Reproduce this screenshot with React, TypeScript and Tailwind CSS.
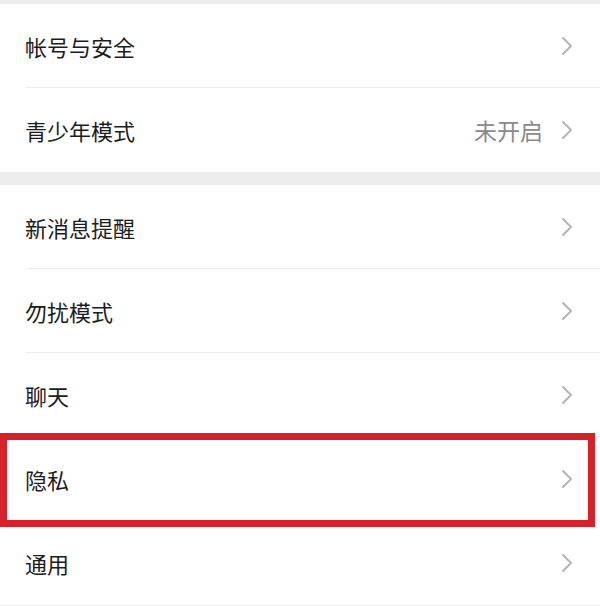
const font = { fontFamily: '"Noto Sans CJK SC", "Noto Sans", sans-serif' };

function Chevron() {
  return (
    <svg width="12" height="20" viewBox="0 0 12 20" fill="none" className="shrink-0">
      <path d="M2 2 L10 10 L2 18" stroke="#b4b4b4" strokeWidth="2" strokeLinecap="round" strokeLinejoin="round" />
    </svg>
  );
}

function Row({ label, value, divider = true, highlight = false }: { label: string; value?: string; divider?: boolean; highlight?: boolean }) {
  return (
    <div className="relative h-[84px] bg-white">
      <div className="flex h-full items-center pl-[25px] pr-[27px]">
        <span className="text-[22px] leading-none text-[#1c1c1c]">{label}</span>
        <div className="ml-auto flex items-center gap-[18px]">
          {value && <span className="text-[23px] leading-none text-[#8a8a8a]">{value}</span>}
          <Chevron />
        </div>
      </div>
      {divider && <div className="absolute bottom-0 left-[26px] right-0 h-px bg-[#ececec]" />}
      {highlight && (
        <div className="pointer-events-none absolute -top-[4px] left-0 z-10 h-[94px] w-[595px] border-[7px] border-[#d7222c]" />
      )}
    </div>
  );
}

export default function App() {
  return (
    <div className="h-[606px] w-[600px] overflow-hidden bg-[#ededed]" style={font}>
      <div className="h-[4px]" />
      <Row label="帐号与安全" />
      <Row label="青少年模式" value="未开启" divider={false} />
      <div className="h-[13px]" />
      <Row label="新消息提醒" />
      <Row label="勿扰模式" />
      <Row label="聊天" />
      <Row label="隐私" divider={false} highlight />
      <Row label="通用" divider={false} />
    </div>
  );
}
